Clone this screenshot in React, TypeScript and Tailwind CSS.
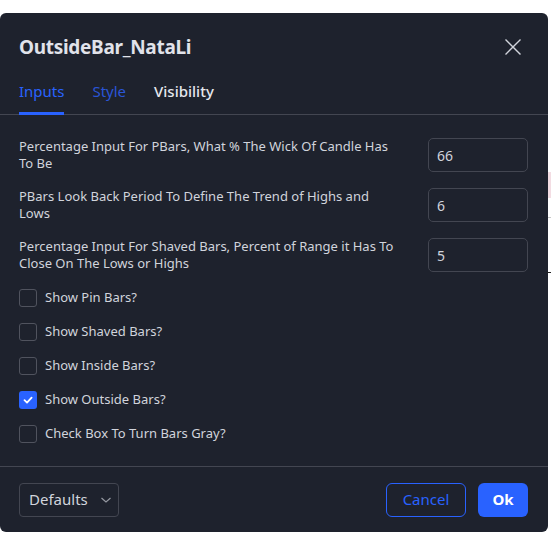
import { useState } from 'react';

interface INumberInput {
  label: string[];
  value: string;
}

const numberInputs: INumberInput[] = [
  { label: ['Percentage Input For PBars, What % The Wick Of Candle Has', 'To Be'], value: '66' },
  { label: ['PBars Look Back Period To Define The Trend of Highs and', 'Lows'], value: '6' },
  {
    label: ['Percentage Input For Shaved Bars, Percent of Range it Has To', 'Close On The Lows or Highs'],
    value: '5',
  },
];

const checkboxLabels = [
  'Show Pin Bars?',
  'Show Shaved Bars?',
  'Show Inside Bars?',
  'Show Outside Bars?',
  'Check Box To Turn Bars Gray?',
];

const Checkbox = ({ checked, onToggle, label }: { checked: boolean; onToggle: () => void; label: string }) => (
  <label className="flex items-center gap-[8px] h-[18px] cursor-pointer" onClick={onToggle}>
    {checked ? (
      <span className="w-[18px] h-[18px] rounded-[3px] bg-[#2962ff] flex items-center justify-center">
        <svg width="12" height="12" viewBox="0 0 12 12" fill="none">
          <path d="M2.5 6.2 L5 8.6 L9.6 3.6" stroke="white" strokeWidth="1.8" strokeLinecap="round" strokeLinejoin="round" />
        </svg>
      </span>
    ) : (
      <span className="w-[18px] h-[18px] rounded-[3px] border border-[#50535e]" />
    )}
    <span className="text-[13px] text-[#d1d4dc]">{label}</span>
  </label>
);

const App = () => {
  const [checks, setChecks] = useState([false, false, false, true, false]);

  const toggle = (i: number) => setChecks((prev) => prev.map((c, idx) => (idx === i ? !c : c)));

  return (
    <div className="relative min-h-screen bg-white pt-[13px]" style={{ fontFamily: '"Noto Sans", "Liberation Sans", sans-serif' }}>
      {/* bits of the chart behind the dialog */}
      <div className="absolute left-[548px] top-[172px] w-[3px] h-[26px] bg-[#f3dde3]" />
      <div className="absolute left-[548px] top-[217px] w-[3px] h-px bg-[#c8c8c8]" />
      <div className="absolute left-[547px] top-[272px] w-[4px] h-px bg-[#222]" />

      <div className="w-[548px] h-[519px] bg-[#1e222d] rounded-[6px] flex flex-col">
        <div className="h-[68px] px-[19px] flex items-center justify-between">
          <h2 className="text-[19px] font-bold text-[#e1e3ea] tracking-[-0.3px]">OutsideBar_NataLi</h2>
          <button className="w-[24px] h-[24px] flex items-center justify-center mr-[4px] text-[#d1d4dc]">
            <svg width="18" height="18" viewBox="0 0 18 18" fill="none">
              <path d="M1.5 1.5 L16.5 16.5 M16.5 1.5 L1.5 16.5" stroke="currentColor" strokeWidth="1.4" />
            </svg>
          </button>
        </div>

        <div className="h-[34px] px-[19px] flex gap-[28px] border-b border-[#434651] text-[15px] leading-[20px]">
          <div className="relative text-[#2962ff]">
            Inputs
            <span className="absolute left-0 right-0 bottom-[-1px] h-[3px] bg-[#2962ff]" />
          </div>
          <div className="text-[#2a55d6]">Style</div>
          <div className="text-[#e6e8ee] font-medium">Visibility</div>
        </div>

        <div className="flex-1 px-[19px] pt-[23px] flex flex-col">
          <div className="flex flex-col gap-[16px]">
            {numberInputs.map((row) => (
              <div key={row.value} className="flex items-center justify-between h-[34px]">
                <div className="text-[13px] leading-[17px] text-[#d1d4dc]">
                  {row.label[0]}
                  <br />
                  {row.label[1]}
                </div>
                <input
                  type="text"
                  defaultValue={row.value}
                  className="w-[100px] h-[34px] mr-[1px] px-[8px] bg-transparent border border-[#434651] rounded-[5px] text-[14px] text-[#d1d4dc] outline-none"
                />
              </div>
            ))}
          </div>

          <div className="flex flex-col gap-[16px] mt-[17px]">
            {checkboxLabels.map((label, i) => (
              <Checkbox key={label} label={label} checked={checks[i]} onToggle={() => toggle(i)} />
            ))}
          </div>
        </div>

        <div className="h-[66px] border-t border-[#434651] px-[19px] flex items-center justify-between">
          <button className="w-[100px] h-[34px] border border-[#434651] rounded-[4px] flex items-center pl-[9px] gap-[12px] text-[15px] text-[#d1d4dc]">
            Defaults
            <svg width="12" height="8" viewBox="0 0 12 8" fill="none">
              <path d="M1.5 2 L6 6 L10.5 2" stroke="#9598a1" strokeWidth="1.2" />
            </svg>
          </button>
          <div className="flex items-center gap-[12px] mr-[1px]">
            <button className="w-[80px] h-[34px] border border-[#2962ff] rounded-[6px] text-[15px] text-[#2962ff]">
              Cancel
            </button>
            <button className="w-[50px] h-[34px] bg-[#2962ff] rounded-[6px] text-[15px] font-bold text-white">
              Ok
            </button>
          </div>
        </div>
      </div>
    </div>
  );
};

export default App;
